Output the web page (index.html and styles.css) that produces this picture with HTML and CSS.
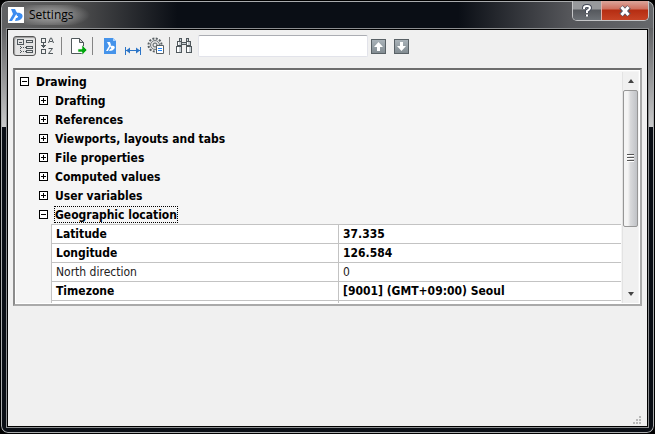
FILE: index.html
```html
<!DOCTYPE html>
<html lang="en">
<head>
<meta charset="utf-8">
<title>Settings</title>
<link rel="stylesheet" href="styles.css">
</head>
<body>
<main class="window">
  <header class="titlebar">
    <svg class="app-icon" width="16" height="16" viewBox="0 0 16 16"><path fill="#fff" d="M0 0h16v16H0z"/><path fill="#3b8cf0" d="M3 2h4l2 4-5 8H1l4-7zM8 6c5-1 8 2 6 5-1 2-4 3-7 3l1-3c2 0 3-2 1-2z"/></svg>
    <h1 class="title">Settings</h1>
    <div class="window-buttons">
      <button class="help" aria-label="Help"><svg width="12" height="14" viewBox="0 0 12 14"><path d="M3 5V4q0-2 3-2t3 2q0 1-3 3v2M6 11v1" fill="none" stroke="#454b59" stroke-width="4"/><path d="M3 5V4q0-2 3-2t3 2q0 1-3 3v2M6 10.500v2" fill="none" stroke="#fff" stroke-width="2"/></svg></button>
      <button class="close" aria-label="Close"><svg width="14" height="12" viewBox="0 0 14 12"><path d="M3 2l8 8M11 2l-8 8" stroke="#555563" stroke-width="5"/><path d="M3.500 2l7 8M10.500 2l-7 8" stroke="#fff" stroke-width="3"/></svg></button>
    </div>
  </header>
  <section class="client">
    <div class="toolbar">
      <button class="tool pressed" aria-label="Categorized"><svg width="18" height="18" viewBox="0 0 18 18" fill="none" stroke="#50585c" shape-rendering="crispEdges"><path d="M1.500 2.500h6v5h-6zM3 5.500h3M10.500 3.500h6v2h-6zM10.500 9.500h6v2h-6zM10.500 13.500h6v2h-6z"/><path stroke-dasharray="1 1" d="M4.500 9v7M5 10.500h5M5 14.500h5"/></svg></button>
      <button class="tool" aria-label="Alphabetical"><svg width="18" height="18" viewBox="0 0 18 18" fill="none" stroke="#50585c"><path shape-rendering="crispEdges" d="M2.500 1.500h4v4h-4zM2.500 12.500h4v4h-4zM4.500 6v5M2 8.500h5M3 9.500h3"/><path d="M9.500 6l2-5h1l2 5M10.500 4.500h3M9.500 11.500h4l-4 5h4.500"/></svg></button>
      <span class="separator"></span>
      <button class="tool" aria-label="Export"><svg width="18" height="18" viewBox="0 0 18 18"><path fill="#fff" stroke="#50585c" d="M1.500 1.500h8l4 4v11h-12z"/><path fill="#d4d4d4" stroke="#50585c" d="M9.500 1.500v4h4z"/><path fill="#00a70d" stroke="#f0f0f0" stroke-width=".6" d="M8 12h4V8l5 5-5 5v-3H8z"/></svg></button>
      <span class="separator"></span>
      <button class="tool" aria-label="Drawing settings"><svg width="18" height="18" viewBox="0 0 18 18"><path fill="#4593ea" d="M3 1h9l3 3v13H3z"/><path fill="#a8d2ff" d="M12 1v3h3z"/><path fill="#fff" d="M6 5h3l1 3-3 6H5l3-5zM9 9c4-1 6 1 4 3-1 1-2 2-5 2l1-2c1 0 2-1 1-1z"/></svg></button>
      <button class="tool" aria-label="Dimension settings"><svg width="18" height="18" viewBox="0 0 18 18"><path d="M1.500 10v8M16.500 10v8M2 13.500h14" stroke="#2c75c7"/><path fill="#2c75c7" d="M2 13.500l4-3v6zM16 13.500l-4-3v6z"/></svg></button>
      <button class="tool" aria-label="Program settings"><svg width="18" height="18" viewBox="0 0 18 18"><circle cx="8" cy="8" r="6.500" fill="none" stroke="#596064" stroke-width="2" stroke-dasharray="2 1.400"/><circle cx="8" cy="8" r="4.500" fill="#ddd" stroke="#70777b"/><circle cx="8" cy="8" r="2" fill="#eee" stroke="#596064"/><path fill="#fff" stroke="#596064" d="M9.500 8.500h7v8h-7z"/><path d="M11 11.500h4M11 13.500h4" stroke="#2388ff"/></svg></button>
      <span class="separator"></span>
      <button class="tool" aria-label="Find"><svg width="18" height="18" viewBox="0 0 18 18" shape-rendering="crispEdges"><g fill="#c9d0d5" stroke="#50585c"><path d="M4.500 1.500h2v3h-2zM11.500 1.500h2v3h-2zM2.500 4.500h4v4h-4zM11.500 4.500h4v4h-4zM6.500 5.500h5v2h-5zM1.500 9.500h5v6h-5zM11.500 9.500h5v6h-5z"/></g><path fill="#fff" d="M2 10h2v5H2zM12 10h2v5h-2zM3 5h1v3H3zM12 5h1v3h-1z"/></svg></button>
      <input class="search" type="text" aria-label="Find setting">
      <button class="step" aria-label="Previous match"><svg width="15" height="15" viewBox="0 0 15 15"><path fill="#fff" d="M7.500 3L12 8H9v4H6V8H3z"/></svg></button>
      <button class="step" aria-label="Next match"><svg width="15" height="15" viewBox="0 0 15 15"><path fill="#fff" d="M7.500 12L3 7h3V3h3v4h3z"/></svg></button>
    </div>
    <div class="panel">
      <div class="tree">
        <button class="node"><i class="box open"></i><span>Drawing</span></button>
        <div class="children">
          <button class="node"><i class="box"></i><span>Drafting</span></button>
          <button class="node"><i class="box"></i><span>References</span></button>
          <button class="node"><i class="box"></i><span>Viewports, layouts and tabs</span></button>
          <button class="node"><i class="box"></i><span>File properties</span></button>
          <button class="node"><i class="box"></i><span>Computed values</span></button>
          <button class="node"><i class="box"></i><span>User variables</span></button>
          <button class="node selected"><i class="box open"></i><span>Geographic location</span></button>
          <table class="properties">
            <colgroup><col class="name"><col></colgroup>
            <tr><th scope="row">Latitude</th><td>37.335</td></tr>
            <tr><th scope="row">Longitude</th><td>126.584</td></tr>
            <tr class="default"><th scope="row">North direction</th><td>0</td></tr>
            <tr><th scope="row">Timezone</th><td>[9001] (GMT+09:00) Seoul</td></tr>
            <tr><th></th><td></td></tr>
          </table>
        </div>
      </div>
      <div class="scrollbar">
        <button class="arrow" aria-label="Scroll up"><svg width="6" height="4" viewBox="0 0 6 4"><path fill="#444" d="M3 0l3 4H0z"/></svg></button>
        <div class="track"><div class="thumb"><i class="grip"></i></div></div>
        <button class="arrow" aria-label="Scroll down"><svg width="6" height="4" viewBox="0 0 6 4"><path fill="#444" d="M3 4L0 0h6z"/></svg></button>
      </div>
    </div>
    <svg class="resize" width="9" height="9" viewBox="0 0 9 9"><path fill="#b9b9b9" d="M6 0h2v2H6zM3 3h2v2H3zM6 3h2v2H6zM0 6h2v2H0zM3 6h2v2H3zM6 6h2v2H6z"/></svg>
  </section>
</main>
</body>
</html>
```
FILE: styles.css
```css
* { box-sizing: border-box; }

body {
  margin: 0;
  background: #000;
  color: #000;
  font: 12px/18px "DejaVu Sans Condensed", "DejaVu Sans", sans-serif;
}

button {
  margin: 0;
  padding: 0;
  border: 0;
  background: none;
  color: inherit;
  font: inherit;
}

svg { display: block; }

.window {
  display: flex;
  flex-direction: column;
  height: 100vh;
  border: 1px solid #000;
  border-radius: 8px;
  padding: 0 5px 5px;
  background:
    linear-gradient(90deg, #606163 0, #555 10%, #0a0e15 27%, #0a0e15 70%, #55565a 87%, #66686b 100%) 0 0 / 100% 27px no-repeat,
    linear-gradient(#606163, #c9cacb) 0 27px / 100% 99px no-repeat,
    #0a0e15;
  box-shadow: inset 0 0 0 1px #a9abad;
}

.titlebar {
  display: flex;
  flex: none;
  align-items: flex-start;
  height: 27px;
  padding-left: 2px;
}

.app-icon { margin-top: 6px; }

.title {
  flex: 1;
  margin: 4px 0 0;
  padding-left: 5px;
  font: 12px/20px "Open Sans", "Noto Sans", sans-serif;
  background: radial-gradient(ellipse 40px 13px at 26px 10px, #a6a6a6 0, #9c9c9c99 55%, transparent 100%);
}

.window-buttons {
  display: flex;
  height: 20px;
  border: 1px solid #c4c5c7;
  border-top: 0;
  border-radius: 0 0 5px 5px;
  overflow: hidden;
}

.window-buttons button {
  display: grid;
  place-items: center;
}

.help {
  width: 28px;
  background: linear-gradient(#97999c 0 8px, #55585d 9px, #6c7075 100%);
}

.window-buttons .close {
  width: 47px;
  border-left: 1px solid #e1b0a8;
  background: linear-gradient(#dba59b 0, #cf6f5e 8px, #b52d12 9px, #c74325 100%);
}

.client {
  display: flex;
  flex: 1;
  flex-direction: column;
  min-height: 0;
  border: 1px solid #000;
  outline: 1px solid #8c8e90;
  margin: 1px;
  background: #f0f0f0;
  padding: 5px 5px 1px;
}

.toolbar {
  display: flex;
  flex: none;
  align-items: center;
  height: 22px;
}

.tool {
  display: grid;
  place-items: center;
  width: 23px;
  height: 20px;
}

.pressed {
  border: 1px solid #555;
  border-radius: 3px;
  background: #e4e4e4;
  box-shadow: inset 1px 1px 1px #999;
}

.separator {
  width: 1px;
  height: 18px;
  margin: 0 5px 0 2px;
  background: #858585;
}

.search {
  width: 170px;
  height: 22px;
  border: 1px solid #e2e3ea;
  border-top-color: #abadb3;
  border-radius: 2px;
  background: #fff;
}

.separator + .tool:has(+ .search) {
  width: 22px;
  margin: 0 3px 0 -2px;
}

.step {
  width: 15px;
  height: 15px;
  margin-left: 3px;
  background: linear-gradient(#adb6bc, #7f898f);
  outline: 1px solid #596166;
  outline-offset: -1px;
}

.step + .step { margin-left: 8px; }

.panel {
  display: flex;
  height: 238px;
  margin-top: 11px;
  border: 2px solid;
  border-color: #6d6d6d #aaa #aaa #8c8c8c;
  outline: 1px solid #fff;
  outline-offset: -3px;
  background: #f5f5f5;
  padding: 2px 2px 1px 1px;
}

.tree {
  flex: 1;
  min-width: 0;
  overflow: hidden;
}

.node {
  display: flex;
  align-items: center;
  height: 19px;
  padding-left: 4px;
  font-weight: bold;
  white-space: nowrap;
}

.node span {
  height: 17px;
  margin-left: 6px;
  border: 1px solid transparent;
  line-height: 17px;
}

.node.selected span { border: 1px dotted #000; }

.children { padding-left: 19px; }

.box {
  width: 9px;
  height: 9px;
  border: 1px solid #000;
  background:
    linear-gradient(#000, #000) center / 5px 1px no-repeat,
    linear-gradient(#000, #000) center / 1px 5px no-repeat,
    #fff;
}

.box.open { background: linear-gradient(#000, #000) center / 5px 1px no-repeat, #fff; }

.properties {
  width: calc(100% - 17px);
  margin-left: 16px;
  border-collapse: collapse;
  table-layout: fixed;
  background: #fff;
}

.name { width: 287px; }

.properties th,
.properties td {
  height: 19px;
  border-top: 1px solid #c3c3c3;
  border-left: 1px solid #c3c3c3;
  padding: 0 4px;
  font-weight: bold;
  text-align: left;
  white-space: nowrap;
}

.properties .default > * {
  color: #222;
  font-weight: normal;
}

.scrollbar {
  display: flex;
  flex-direction: column;
  width: 16px;
  background: #f0f0f0;
  border-left: 1px solid #e3e3e3;
}

.arrow {
  display: grid;
  place-items: center;
  height: 18px;
}

.track { flex: 1; }

.thumb {
  display: grid;
  place-items: center;
  height: 70%;
  border: 1px solid #969696;
  border-radius: 2px;
  background: linear-gradient(90deg, #f4f4f4 30%, #d8d9db 50%, #c0c2c6);
}

.grip {
  width: 7px;
  height: 8px;
  background: repeating-linear-gradient(#555 0 1px, #fff 1px 2px, transparent 2px 3px);
}

.resize {
  flex: none;
  margin: auto 0 0 auto;
}
```
